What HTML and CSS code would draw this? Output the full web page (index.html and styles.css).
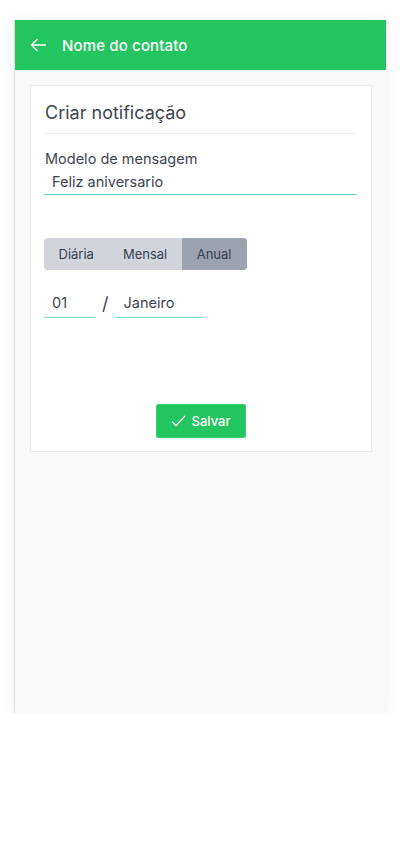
FILE: index.html
```html
<!DOCTYPE html>
<html lang="pt">
<head>
<meta charset="utf-8">
<link rel="stylesheet" href="styles.css">
<title>Nome do contato</title>
</head>
<body>
<div class="app">
  <header class="topbar">
    <svg class="back" width="17" height="14" viewBox="0 0 17 14"><path d="M16 7H1.5M7.5 1L1.5 7l6 6" fill="none" stroke="#fff" stroke-width="1.4"/></svg>
    <span class="topbar-title">Nome do contato</span>
  </header>
  <main class="content">
    <section class="card">
      <h1 class="card-title">Criar notificação</h1>
      <div class="field">
        <label class="label">Modelo de mensagem</label>
        <div class="input">Feliz aniversario</div>
      </div>
      <div class="segmented">
        <span class="seg">Diária</span>
        <span class="seg">Mensal</span>
        <span class="seg active">Anual</span>
      </div>
      <div class="date-row">
        <div class="input small day">01</div>
        <span class="slash">/</span>
        <div class="input small month">Janeiro</div>
      </div>
      <div class="actions">
        <button class="save"><svg width="15" height="12" viewBox="0 0 15 12"><path d="M1 6.5l4 4L14 1" fill="none" stroke="#fff" stroke-width="1.3"/></svg>Salvar</button>
      </div>
    </section>
  </main>
</div>
</body>
</html>
```
FILE: styles.css
```css
html, body { margin: 0; padding: 0; background: #fff; }
body { font-family: "Inter", "Open Sans", sans-serif; color: #374151; }
.app {
  margin: 20px 14px 0 14px;
  height: 693px;
  background: #f9f9f9;
  border-left: 1px solid #e2e2e2;
  box-shadow: 0 0 14px rgba(0,0,0,0.06);
  display: flex; flex-direction: column;
}
.topbar {
  height: 50px; background: #22c55e;
  display: flex; align-items: center; gap: 15px;
  padding: 0 15px;
}
.topbar-title { color: #fff; font-size: 15px; font-weight: 500; letter-spacing: 0.15px; }
.content { padding: 15px 14px 0 15px; }
.card {
  background: #fff; border: 1px solid #ebebeb;
  padding: 14px 14px 14px 13px;
  height: 337px;
}
.card-title {
  margin: 0; font-size: 18px; font-weight: 400; color: #3f4550;
  padding: 0 0 8px 1px; border-bottom: 1px solid #eceef2;
  line-height: 25px;
}
.field { margin-top: 15px; }
.label { display: block; font-size: 14.5px; color: #3f4550; line-height: 20px; padding-left: 1px; }
.input {
  font-size: 14.5px; color: #3f4550; line-height: 22px;
  padding: 2px 8px 1px; border-bottom: 1px solid #5fd0c4;
}
.segmented {
  margin-top: 43px; display: inline-flex;
  background: #d1d5db; border-radius: 4px; overflow: hidden;
  height: 32px;
}
.seg { font-size: 13px; color: #374151; padding: 0 14.5px; display: flex; align-items: center; }
.seg.active { background: #9ca3af; padding: 0 15px; }
.date-row { margin-top: 22px; display: flex; align-items: flex-end; gap: 0; }
.input.small { padding: 0 8px 3px; line-height: 22px; }
.day { width: 35px; border-color: #78dccf; }
.slash { font-size: 18px; color: #3f4550; padding: 0 7px 3px 7px; line-height: 22px; }
.month { width: 71px; border-color: #78dccf; }
.actions { display: flex; justify-content: center; margin-top: 86px; }
.save {
  display: flex; align-items: center; gap: 6px;
  background: #22c55e; color: #fff; border: 1px solid #3bd070; border-radius: 2px;
  width: 90px; height: 34px; justify-content: center;
  font-family: inherit; font-size: 13px; font-weight: 500; padding: 0;
}
```
